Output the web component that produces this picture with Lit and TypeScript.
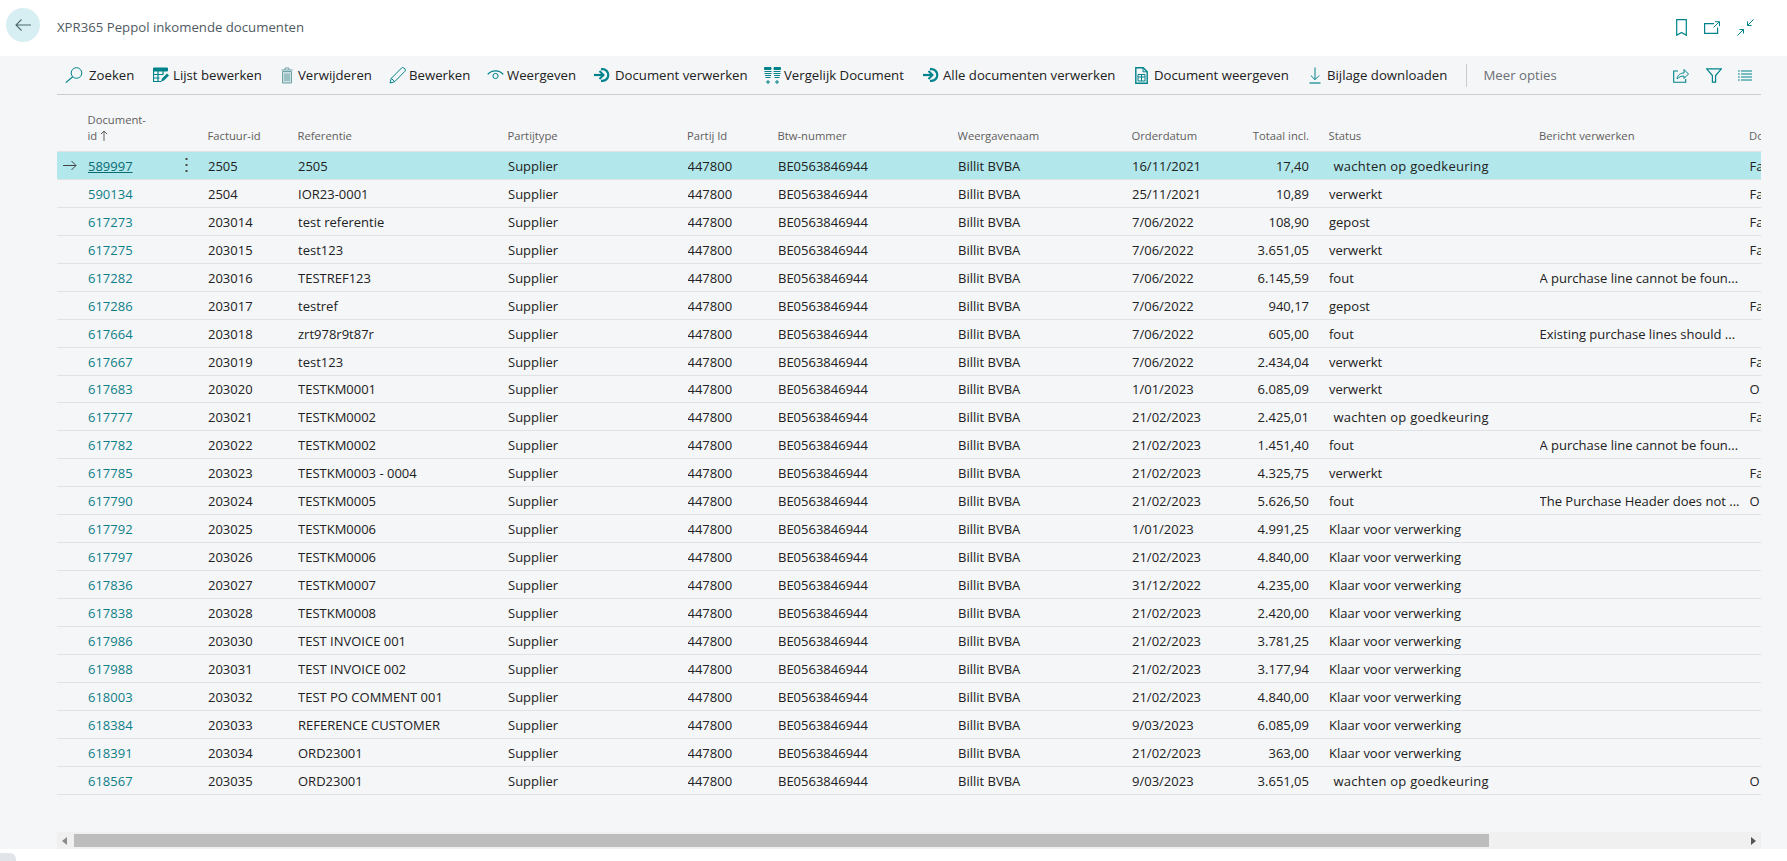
import { LitElement, html, css, svg } from "lit";
import { customElement } from "lit/decorators.js";

const TEAL = "#00838a";

// kolommen: pijl, document, puntjes, factuur, referentie, type, partij, btw, naam, datum, totaal, status, bericht, doc
const rows: string[][] = [
  ["589997", "2505", "2505", "16/11/2021", "17,40", "w", "", "Factuur"],
  ["590134", "2504", "IOR23-0001", "25/11/2021", "10,89", "verwerkt", "", "Factuur"],
  ["617273", "203014", "test referentie", "7/06/2022", "108,90", "gepost", "", "Factuur"],
  ["617275", "203015", "test123", "7/06/2022", "3.651,05", "verwerkt", "", "Factuur"],
  ["617282", "203016", "TESTREF123", "7/06/2022", "6.145,59", "fout", "A purchase line cannot be foun...", ""],
  ["617286", "203017", "testref", "7/06/2022", "940,17", "gepost", "", "Factuur"],
  ["617664", "203018", "zrt978r9t87r", "7/06/2022", "605,00", "fout", "Existing purchase lines should ...", ""],
  ["617667", "203019", "test123", "7/06/2022", "2.434,04", "verwerkt", "", "Factuur"],
  ["617683", "203020", "TESTKM0001", "1/01/2023", "6.085,09", "verwerkt", "", "O"],
  ["617777", "203021", "TESTKM0002", "21/02/2023", "2.425,01", "w", "", "Factuur"],
  ["617782", "203022", "TESTKM0002", "21/02/2023", "1.451,40", "fout", "A purchase line cannot be foun...", ""],
  ["617785", "203023", "TESTKM0003 - 0004", "21/02/2023", "4.325,75", "verwerkt", "", "Factuur"],
  ["617790", "203024", "TESTKM0005", "21/02/2023", "5.626,50", "fout", "The Purchase Header does not ...", "O"],
  ["617792", "203025", "TESTKM0006", "1/01/2023", "4.991,25", "k", "", ""],
  ["617797", "203026", "TESTKM0006", "21/02/2023", "4.840,00", "k", "", ""],
  ["617836", "203027", "TESTKM0007", "31/12/2022", "4.235,00", "k", "", ""],
  ["617838", "203028", "TESTKM0008", "21/02/2023", "2.420,00", "k", "", ""],
  ["617986", "203030", "TEST INVOICE 001", "21/02/2023", "3.781,25", "k", "", ""],
  ["617988", "203031", "TEST INVOICE 002", "21/02/2023", "3.177,94", "k", "", ""],
  ["618003", "203032", "TEST PO COMMENT 001", "21/02/2023", "4.840,00", "k", "", ""],
  ["618384", "203033", "REFERENCE CUSTOMER", "9/03/2023", "6.085,09", "k", "", ""],
  ["618391", "203034", "ORD23001", "21/02/2023", "363,00", "k", "", ""],
  ["618567", "203035", "ORD23001", "9/03/2023", "3.651,05", "w", "", "O"],
];

const statusText = (s: string) =>
  s === "w" ? "wachten op goedkeuring" : s === "k" ? "Klaar voor verwerking" : s;

const icon = (w: number, h: number, body: unknown) => html`<svg
  class="ic"
  width=${w}
  height=${h}
  viewBox="0 0 ${w} ${h}"
  fill="none"
  stroke=${TEAL}
  stroke-width="1"
>
  ${body}
</svg>`;

const processIcon = icon(
  16,
  16,
  svg`<path d="M7 2.2h1.5a5.8 5.8 0 0 1 0 11.6H7" stroke-width="2.2"/>
  <path d="M0 8h8" stroke-width="2.2"/><path d="M5.5 4l4 4-4 4" stroke-width="2"/>`
);

// width: afstand tot het volgende icoon, gap: ruimte tussen icoon en tekst
const tools = [
  {
    label: "Zoeken",
    width: 88,
    gap: 6,
    icon: icon(
      18,
      16,
      svg`<circle cx="11.5" cy="6" r="5.3"/><path d="M7.7 9.8L.8 15.6" stroke-width="1.2"/>`
    ),
  },
  {
    label: "Lijst bewerken",
    width: 128,
    gap: 4,
    icon: icon(
      16,
      16,
      svg`<path d="M.5 1h14v3H.5z" fill="${TEAL}"/>
      <path d="M.5 4v10.5h8M5 4v10.5M10 4v3M.5 7.5h10M.5 11h6" stroke-width="1.2"/>
      <path d="M8 14.5l1-3 5-5 2 2-5 5z" fill="${TEAL}" stroke="none"/>`
    ),
  },
  {
    label: "Verwijderen",
    width: 108,
    gap: 5,
    icon: icon(
      12,
      17,
      svg`<g stroke="#6fa3a8"><path d="M1.5 4.5h9v11.5h-9z" fill="#c9dfe1"/><path d="M.3 3h11.4M4 3V1h4v2" /><path d="M4 6.5v7.5M6 6.5v7.5M8 6.5v7.5"/></g>`
    ),
  },
  {
    label: "Bewerken",
    width: 98,
    gap: 3,
    icon: icon(
      17,
      17,
      svg`<path d="M1 16l1.3-4.7L12.6 1a1.6 1.6 0 0 1 2.3 0l1 1a1.6 1.6 0 0 1 0 2.3L5.7 14.7z"/><path d="M2.3 11.3l3.4 3.4"/>`
    ),
  },
  {
    label: "Weergeven",
    width: 107,
    gap: 3,
    icon: icon(
      17,
      12,
      svg`<path d="M.7 5.4C4.5.6 12.5.6 16.3 5.4" stroke-width="1.2"/><circle cx="8.5" cy="7" r="2.6"/>`
    ),
  },
  { label: "Document verwerken", width: 170, gap: 5, icon: processIcon },
  {
    label: "Vergelijk Document",
    width: 159,
    gap: 3,
    icon: icon(
      17,
      17,
      svg`<path d="M.5 .5h6.500v2H.5zM10 .5h6.500v2H10z" fill="${TEAL}"/>
      <path d="M.5 4.500h7M.5 6.500h7M1 8.500h6M1.500 10.500h5M9.500 4.500h7M9.500 6.500h7M10 8.500h6M10.500 10.500h5"/>
      <path d="M4 13v4M2 15h4M13 13v4M11 15h4"/>`
    ),
  },
  { label: "Alle documenten verwerken", width: 212, gap: 4, icon: processIcon },
  {
    label: "Document weergeven",
    width: 174,
    gap: 6,
    icon: icon(
      13,
      17,
      svg`<path d="M.8.8h7.4l4 4v11.4H.8z" stroke-width="1.4"/><path d="M8 .8v4h4.2M3 7.5h7v6.5H3zM3 10h7M6.5 7.5V14" />`
    ),
  },
  {
    label: "Bijlage downloaden",
    width: 156.5,
    gap: 6,
    icon: icon(
      12,
      17,
      svg`<path d="M6 .5v12M1.8 8.5L6 12.7l4.2-4.2" /><path d="M.5 16h11" stroke-width="1.2"/>`
    ),
  },
];

@customElement("app-root")
export class AppRoot extends LitElement {
  static styles = css`
    :host {
      display: block;
      height: 861px;
      overflow: hidden;
      background: #fff;
      font-family: "Open Sans", "Noto Sans", sans-serif;
      font-size: 13px;
      color: #212121;
    }
    .ic {
      display: block;
      flex: none;
    }
    .top {
      height: 56px;
      display: flex;
      align-items: center;
      padding: 0 33px 6px 6px;
      box-sizing: border-box;
    }
    .back {
      width: 34px;
      height: 34px;
      border-radius: 50%;
      background: #d7eff2;
      display: flex;
      align-items: center;
      justify-content: center;
      margin-right: 17px;
    }
    .title {
      flex: 1;
      color: #505a63;
      font-size: 13.2px;
      margin-top: 3px;
    }
    .top-icons {
      display: flex;
      align-items: center;
      gap: 17px;
      margin-top: 4px;
    }
    .main {
      height: 793px;
      background: #f5f6f8;
      padding: 0 26px 0 57px;
      display: flex;
      flex-direction: column;
      box-sizing: border-box;
    }
    .toolbar {
      height: 39px;
      flex: none;
      box-sizing: border-box;
      border-bottom: 1px solid #c9cbce;
      display: flex;
      align-items: center;
      padding: 0 9px 0 8px;
      font-size: 13.2px;
    }
    .tool {
      display: flex;
      align-items: center;
      flex: none;
      white-space: nowrap;
    }
    .sep {
      width: 1px;
      height: 23px;
      flex: none;
      background: #c9cbce;
      margin-right: 17px;
    }
    .more {
      color: #6b6f73;
    }
    .tool-end {
      margin-left: auto;
      display: flex;
      align-items: center;
      gap: 16.5px;
    }
    .list {
      flex: 1;
      overflow: hidden;
    }
    .row {
      display: grid;
      grid-template-columns: 31px 89px 31px 90px 210px 179.5px 90.5px 180px 174px 100px 77px 20px 210.5px 210px 200px;
      width: 1900px;
      height: 27.95px;
      padding-top: 1px;
      box-sizing: border-box;
      align-items: center;
      border-bottom: 1px solid #e0e2e5;
      white-space: nowrap;
    }
    .row > * {
      overflow: hidden;
    }
    .row.head {
      height: 57px;
      padding-top: 0;
      align-items: end;
      border-bottom: 1px solid #e0e2e5;
      padding-bottom: 7px;
      font-size: 11.25px;
      line-height: 16px;
      color: #605e5c;
    }
    .head > div {
      margin-left: -0.5px;
    }
    .sort {
      display: inline-block;
      vertical-align: -1px;
      margin-left: 3px;
    }
    .row.sel {
      background: #b2e8ec;
    }
    .num {
      text-align: right;
    }
    .wait {
      padding-left: 4.5px;
      letter-spacing: 0.25px;
    }
    a {
      color: #0d7f88;
      text-decoration: none;
    }
    .sel a {
      text-decoration: underline;
      color: #0a6a72;
    }
    .arrow,
    .dots {
      display: flex;
      align-items: center;
    }
    .arrow {
      padding-left: 6px;
    }
    .dots {
      padding-left: 8px;
    }
    .scroll {
      height: 17px;
      flex: none;
      background: #f0f0f0;
      display: flex;
      align-items: center;
      gap: 6px;
      padding: 0 5px;
      box-sizing: border-box;
    }
    .thumb {
      width: 1415px;
      height: 13px;
      background: #bdbdbd;
    }
    .tri {
      flex: none;
    }
    .tri-end {
      margin-left: auto;
    }
    .foot {
      height: 12px;
      display: flex;
      align-items: flex-end;
    }
    .corner {
      width: 16px;
      height: 8px;
      background: #e1e4e8;
      border-radius: 0 6px 0 0;
    }
  `;

  private renderRow(r: string[], i: number) {
    const sel = i === 0;
    return html`<div class="row ${sel ? "sel" : ""}">
      <div class="arrow">
        ${sel
          ? html`<svg width="14" height="11" viewBox="0 0 14 11" fill="none" stroke="#444" class="ic">
              <path d="M0 5.5h13M8.5 1l4.5 4.5L8.5 10" />
            </svg>`
          : ""}
      </div>
      <div><a>${r[0]}</a></div>
      <div class="dots">
        ${sel
          ? html`<svg width="3" height="15" viewBox="0 0 3 15" fill="#4a4a3a" class="ic">
              <rect x="0.5" y="0" width="2" height="2" /><rect x="0.5" y="6" width="2" height="2" /><rect
                x="0.5"
                y="12"
                width="2"
                height="2"
              />
            </svg>`
          : ""}
      </div>
      <div>${r[1]}</div>
      <div>${r[2]}</div>
      <div>Supplier</div>
      <div>447800</div>
      <div>BE0563846944</div>
      <div>Billit BVBA</div>
      <div>${r[3]}</div>
      <div class="num">${r[4]}</div>
      <div></div>
      <div class=${r[5] === "w" ? "wait" : ""}>${statusText(r[5])}</div>
      <div>${r[6]}</div>
      <div>${r[7]}</div>
    </div>`;
  }

  render() {
    return html`
      <div class="top">
        <div class="back">
          <svg width="16" height="12" viewBox="0 0 16 12" fill="none" stroke="#4d6a6f" stroke-width="1.1" class="ic">
            <path d="M16 6H1M6.500.5L1 6l5.500 5.500" />
          </svg>
        </div>
        <div class="title">XPR365 Peppol inkomende documenten</div>
        <div class="top-icons">
          ${icon(11, 17, svg`<path d="M.7.7h9.600v15.600L5.500 13.500.7 16.300z" stroke-width="1.2"/>`)}
          ${icon(
            16,
            13,
            svg`<path d="M10 2.700H.6v9.700h13V6.500" stroke-width="1.2"/><path d="M9.500 6.500l5.500-5.500M11 .7h4.500v4.500"/>`
          )}
          ${icon(
            17,
            17,
            svg`<path d="M16.500.5l-6 6M10.500 2.500v4h4M.5 16.500l6-6M2.500 10.500h4v4"/>`
          )}
        </div>
      </div>
      <div class="main">
        <div class="toolbar">
          ${tools.map(
            (t) => html`<div class="tool" style="width:${t.width}px">
              ${t.icon}<span style="margin-left:${t.gap}px">${t.label}</span>
            </div>`
          )}
          <div class="sep"></div>
          <div class="more">Meer opties</div>
          <div class="tool-end">
            ${icon(
              16,
              15,
              svg`<path d="M5 3H.7v11.300h12V11" stroke-width="1.1"/><path d="M4 11c.5-4 3.500-6 7-6V1.500l4.500 4.500-4.500 4.500V8C8 8 6 9 4 11z"/>`
            )}
            ${icon(
              16,
              15,
              svg`<path d="M.6.8h14.800L9.600 7.500v6.700H6.400V7.500z" stroke-width="1.2"/>`
            )}
            ${icon(
              14,
              11,
              svg`<path d="M3 1h11M3 4h11M3 7h11M3 10h11M0 1h1.800M0 4h1.800M0 7h1.800M0 10h1.800" stroke-width="1.1"/>`
            )}
          </div>
        </div>
        <div class="list">
          <div class="row head">
            <div></div>
            <div>
              Document-<br />id<svg class="sort" width="8" height="11" viewBox="0 0 8 11" fill="none" stroke="#605e5c">
                <path d="M4 11V1M1 4l3-3 3 3" />
              </svg>
            </div>
            <div></div>
            <div>Factuur-id</div>
            <div>Referentie</div>
            <div>Partijtype</div>
            <div>Partij Id</div>
            <div>Btw-nummer</div>
            <div>Weergavenaam</div>
            <div>Orderdatum</div>
            <div class="num">Totaal incl.</div>
            <div></div>
            <div>Status</div>
            <div>Bericht verwerken</div>
            <div>Document</div>
          </div>
          ${rows.map((r, i) => this.renderRow(r, i))}
        </div>
        <div class="scroll">
          <svg width="6" height="8" viewBox="0 0 6 8" fill="#8a8a8a" class="tri"><path d="M5 0v8L0 4z" /></svg>
          <div class="thumb"></div>
          <svg width="6" height="8" viewBox="0 0 6 8" fill="#555" class="tri tri-end"><path d="M1 0v8l5-4z" /></svg>
        </div>
      </div>
      <div class="foot"><div class="corner"></div></div>
    `;
  }
}
